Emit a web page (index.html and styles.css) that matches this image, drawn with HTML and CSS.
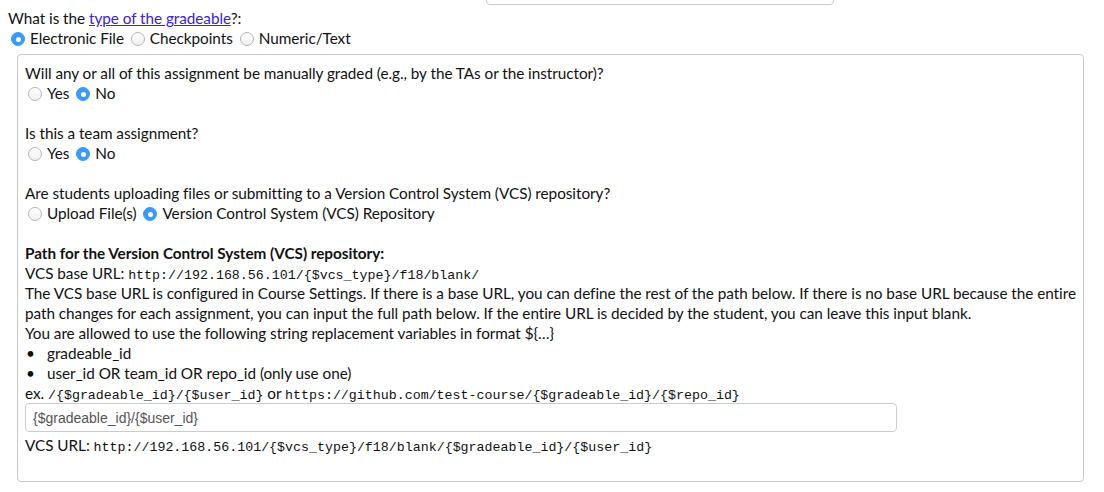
FILE: index.html
```
<!DOCTYPE html>
<html>
<head>
<meta charset="utf-8">
<link rel="stylesheet" href="styles.css">
</head>
<body>
<div class="top-row"><input class="top-input" type="text"></div>
<div class="line">What is the <a class="link" href="#">type of the gradeable</a>?:</div>
<div class="line"><span class="radio checked"></span>Electronic File <span class="radio"></span>Checkpoints <span class="radio"></span>Numeric/Text</div>
<div class="panel">
  <div class="line">Will any or all of this assignment be manually graded (e.g., by the TAs or the instructor)?</div>
  <div class="line"><span class="radio"></span>Yes <span class="radio checked"></span>No</div>
  <div class="line"></div>
  <div class="line">Is this a team assignment?</div>
  <div class="line"><span class="radio"></span>Yes <span class="radio checked"></span>No</div>
  <div class="line"></div>
  <div class="line">Are students uploading files or submitting to a Version Control System (VCS) repository?</div>
  <div class="line"><span class="radio"></span>Upload File(s) <span class="radio checked"></span>Version Control System (VCS) Repository</div>
  <div class="line"></div>
  <div class="line bold">Path for the Version Control System (VCS) repository:</div>
  <div class="line">VCS base URL: <code class="mono">http://192.168.56.101/{$vcs_type}/f18/blank/</code></div>
  <div class="line">The VCS base URL is configured in Course Settings. If there is a base URL, you can define the rest of the path below. If there is no base URL because the entire path changes for each assignment, you can input the full path below. If the entire URL is decided by the student, you can leave this input blank.</div>
  <div class="line">You are allowed to use the following string replacement variables in format ${…}</div>
  <ul class="vars">
    <li>gradeable_id</li>
    <li>user_id OR team_id OR repo_id (only use one)</li>
  </ul>
  <div class="line">ex. <code class="mono">/{$gradeable_id}/{$user_id}</code> or <code class="mono">https://github.com/test-course/{$gradeable_id}/{$repo_id}</code></div>
  <input class="path-input" type="text" placeholder="{$gradeable_id}/{$user_id}">
  <div class="line">VCS URL: <code class="mono">http://192.168.56.101/{$vcs_type}/f18/blank/{$gradeable_id}/{$user_id}</code></div>
</div>
</body>
</html>
```
FILE: styles.css
```
html, body {
  margin: 0;
  padding: 0;
  background: #fff;
}
body {
  padding: 0 8px;
  font-family: "Lato", "Open Sans", sans-serif;
  font-size: 15.3px;
  letter-spacing: -0.04px;
  line-height: 20px;
  color: #111;
}
.top-row {
  display: flex;
  margin-top: -25px;
  padding-left: 478px;
}
.top-input {
  width: 348px;
  height: 30px;
  box-sizing: border-box;
  border: 1px solid #ccc;
  border-radius: 4px;
  background: #fff;
  margin: 0;
}
.line {
  min-height: 20px;
  line-height: 20px;
}
.top-row + .line {
  margin-top: 3px;
}
.link {
  color: #3b21d8;
  text-decoration: underline;
}
.radio {
  display: inline-block;
  position: relative;
  width: 14px;
  height: 14px;
  box-sizing: border-box;
  border-radius: 50%;
  border: 1px solid #b5b5b5;
  background: linear-gradient(#fff, #f0f0f0);
  margin: 0 5px 0 3px;
  vertical-align: -2px;
}
.radio.checked {
  border-color: #3b99fc;
  background: #3b99fc;
}
.radio.checked::after {
  content: "";
  position: absolute;
  left: 3.5px;
  top: 3.5px;
  width: 5px;
  height: 5px;
  border-radius: 50%;
  background: #fff;
}
.panel {
  margin: 6px 12px 0 9px;
  border: 1px solid #c8c8c8;
  border-radius: 4px;
  padding: 8px 2px 26px 7px;
}
.bold {
  font-weight: bold;
}
.mono {
  font-family: "Liberation Mono", monospace;
  font-size: 13.3px;
  letter-spacing: 0;
  line-height: 14px;
}
.vars {
  list-style: none;
  margin: 0;
  padding: 0;
}
.vars li {
  display: flex;
  line-height: 20px;
}
.vars li::before {
  content: "•";
  width: 22px;
  padding-left: 1px;
  box-sizing: border-box;
  flex: none;
}
.path-input {
  display: block;
  width: 872px;
  height: 29px;
  box-sizing: border-box;
  margin: 0 0 3px;
  border: 1px solid #ccc;
  border-radius: 4px;
  padding: 0 7px;
  font-family: "Liberation Sans", Arial, sans-serif;
  font-size: 14px;
  letter-spacing: 0;
  color: #555;
  background: #fff;
}
.path-input::placeholder {
  color: #555;
}
```
